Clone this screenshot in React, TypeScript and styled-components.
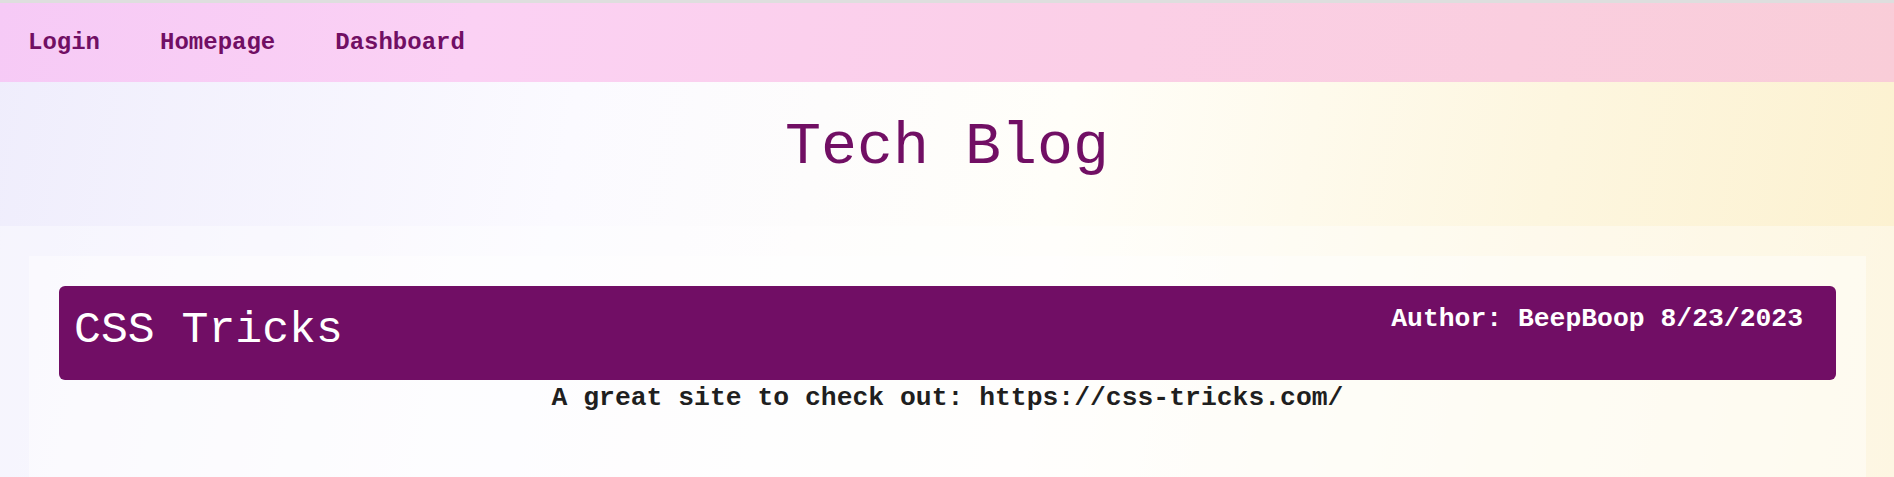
import React from "react";
import styled, { createGlobalStyle } from "styled-components";

const GlobalStyle = createGlobalStyle`
  html, body {
    margin: 0;
    padding: 0;
  }
  body {
    border-top: 3px solid #dedede;
    font-family: "Liberation Mono", "Courier New", monospace;
    background: linear-gradient(100deg, #efedfc 0%, #fbfaff 30%, #fffef9 55%, #fdf6df 80%, #fcf1cf 100%);
    overflow: hidden;
  }
`;

const Page = styled.div`
  display: flex;
  flex-direction: column;
  height: 474px;
`;

const Nav = styled.nav`
  display: flex;
  align-items: center;
  gap: 60px;
  height: 79px;
  padding: 0 28px;
  background: linear-gradient(100deg, #f6caf6 0%, #fbd1f4 25%, #fbcfe6 60%, #f9cdd8 100%);
`;

const NavLink = styled.a`
  font-size: 24px;
  font-weight: 700;
  color: #710f64;
  text-decoration: none;
  line-height: 1.133;
`;

const Header = styled.header`
  height: 144px;
  display: flex;
  justify-content: center;
  box-sizing: border-box;
  padding-top: 32px;
`;

const Title = styled.h1`
  margin: 0;
  font-size: 60px;
  font-weight: 400;
  color: #710f64;
  line-height: 1.133;
`;

const Main = styled.main`
  flex: 1;
  display: flex;
  flex-direction: column;
  padding: 30px 28px 0 29px;
  background: rgba(255, 255, 255, 0.4);
`;

const Card = styled.article`
  flex: 1;
  padding: 30px 30px 0;
  background: rgba(255, 255, 255, 0.45);
`;

const PostHeader = styled.div`
  display: flex;
  justify-content: space-between;
  align-items: flex-start;
  height: 94px;
  box-sizing: border-box;
  padding: 19px 33px 0 15px;
  background: #710e65;
  border-radius: 6px;
  color: #ffffff;
`;

const PostTitle = styled.h2`
  margin: 0;
  font-size: 44.8px;
  font-weight: 400;
  line-height: 1.133;
`;

const Meta = styled.span`
  font-size: 26.4px;
  font-weight: 700;
  line-height: 1.133;
`;

const PostBody = styled.p`
  margin: 4px 0 0;
  text-align: center;
  font-size: 26.4px;
  font-weight: 700;
  color: #1f1f1f;
  line-height: 1.133;
`;

export default function App() {
  return (
    <>
      <GlobalStyle />
      <Page>
        <Nav>
          <NavLink href="#">Login</NavLink>
          <NavLink href="#">Homepage</NavLink>
          <NavLink href="#">Dashboard</NavLink>
        </Nav>
        <Header>
          <Title>Tech Blog</Title>
        </Header>
        <Main>
          <Card>
            <PostHeader>
              <PostTitle>CSS Tricks</PostTitle>
              <Meta>Author: BeepBoop 8/23/2023</Meta>
            </PostHeader>
            <PostBody>A great site to check out: https://css-tricks.com/</PostBody>
          </Card>
        </Main>
      </Page>
    </>
  );
}
